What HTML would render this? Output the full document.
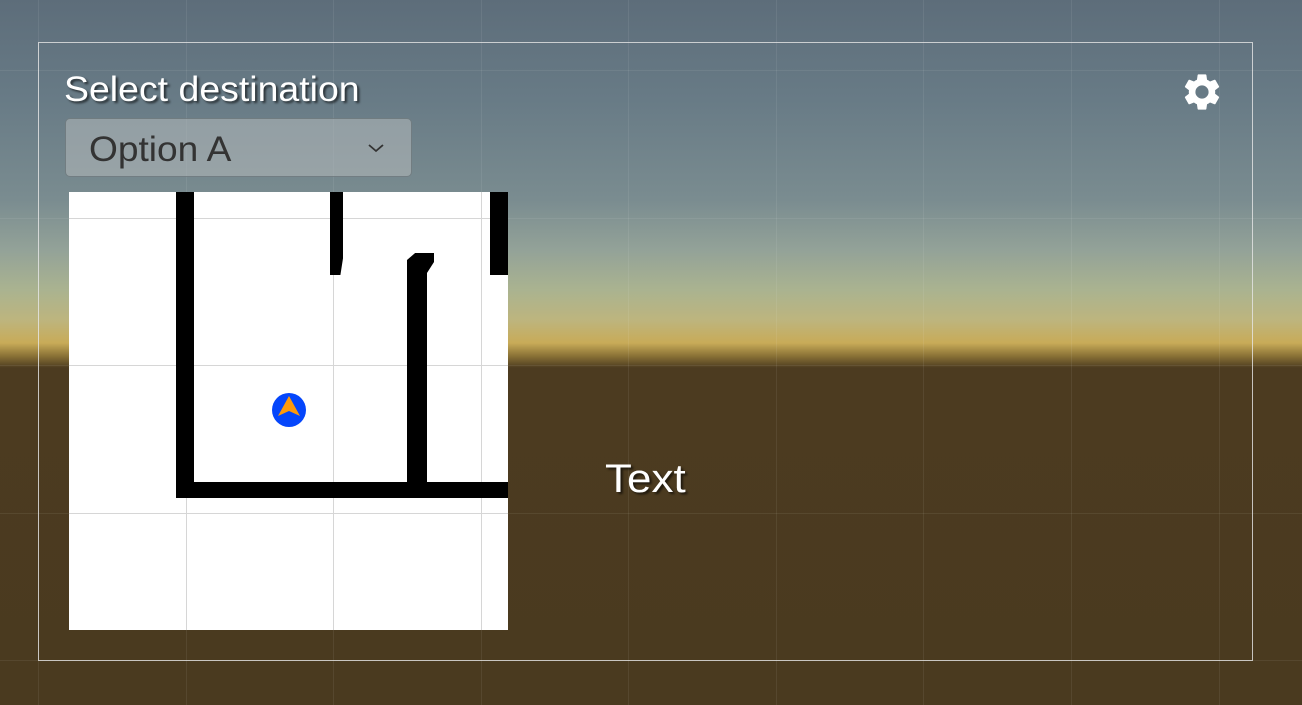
<!DOCTYPE html>
<html><head><style>
html,body{margin:0;padding:0;width:1302px;height:705px;overflow:hidden}
body{position:relative;font-family:"Liberation Sans",sans-serif;
background:linear-gradient(to bottom,#5d6d7a 0px,#687b86 100px,#7a8c90 200px,#93a298 250px,#aab390 290px,#bdb57e 320px,#c8ab58 343px,#8a7236 356px,#4c3b20 368px,#4a3a1f 705px)}
.gl{position:absolute;background:rgba(255,255,255,0.07)}
.v{width:1px;top:0;height:705px}
.h{height:1px;left:0;width:1302px}
.frame{position:absolute;left:38px;top:42px;width:1213px;height:617px;border:1px solid rgba(230,230,230,0.8)}
.title{position:absolute;left:64px;top:70px;font-size:35px;color:#fff;text-shadow:2px 2px 2px rgba(0,0,0,0.6);transform:scaleX(1.07);transform-origin:0 0}
.dd{position:absolute;left:65px;top:118px;width:347px;height:59px;border-radius:5px;background:rgba(180,185,188,0.55);border:1px solid rgba(90,100,105,0.6);box-sizing:border-box}
.dd span{position:absolute;left:23px;top:11px;font-size:35px;color:#333;transform:scaleX(1.06);transform-origin:0 0}
.map{position:absolute;left:69px;top:192px;width:439px;height:438px;background:#fff;overflow:hidden}
.map .ml{position:absolute;background:#d6d6d6}
.w{position:absolute;background:#000}
.text{position:absolute;left:605px;top:457px;font-size:40px;color:#fff;text-shadow:2px 2px 2px rgba(0,0,0,0.6);transform:scaleX(1.1);transform-origin:0 0}
</style></head><body>
<div class="gl v" style="left:38px"></div><div class="gl v" style="left:186px"></div><div class="gl v" style="left:333px"></div><div class="gl v" style="left:481px"></div><div class="gl v" style="left:628px"></div><div class="gl v" style="left:776px"></div><div class="gl v" style="left:923px"></div><div class="gl v" style="left:1071px"></div><div class="gl v" style="left:1219px"></div>
<div class="gl h" style="top:70px"></div><div class="gl h" style="top:218px"></div><div class="gl h" style="top:365px"></div><div class="gl h" style="top:513px"></div><div class="gl h" style="top:660px"></div>
<div class="frame"></div>
<div class="title">Select destination</div>
<div class="dd"><span>Option A</span>
<svg style="position:absolute;left:301px;top:23px" width="18" height="12" viewBox="0 0 18 12"><path d="M2 3 L9 9 L16 3" fill="none" stroke="#333" stroke-width="1.8"/></svg></div>
<svg style="position:absolute;left:1180px;top:70px" width="44" height="44" viewBox="0 0 24 24"><path fill="#fff" d="M19.14 12.94c.04-.3.06-.61.06-.94s-.02-.64-.07-.94l2.03-1.58a.49.49 0 0 0 .12-.61l-1.92-3.32a.49.49 0 0 0-.59-.22l-2.39.96c-.5-.38-1.030-.7-1.62-.94l-.36-2.54a.48.48 0 0 0-.48-.41h-3.84c-.24 0-.43.17-.47.41l-.36 2.540c-.59.24-1.130.57-1.62.94l-2.39-.96a.48.48 0 0 0-.59.22L2.74 8.87c-.12.21-.08.47.12.61l2.03 1.58c-.05.3-.09.63-.09.94s.02.64.07.94l-2.03 1.58a.49.49 0 0 0-.12.61l1.92 3.32c.12.22.37.29.59.22l2.39-.96c.5.38 1.03.7 1.62.94l.36 2.54c.05.24.24.41.48.41h3.84c.24 0 .44-.17.47-.41l.36-2.54c.59-.24 1.13-.56 1.62-.94l2.39.96c.22.08.47 0 .59-.22l1.92-3.32c.12-.22.07-.47-.12-.61l-2.01-1.58zM12 15.6A3.6 3.6 0 1 1 12 8.4a3.6 3.6 0 0 1 0 7.2z"/></svg>
<div class="map">
<div class="ml" style="left:117px;top:0;width:1px;height:438px"></div>
<div class="ml" style="left:264px;top:0;width:1px;height:438px"></div>
<div class="ml" style="left:412px;top:0;width:1px;height:438px"></div>
<div class="ml" style="top:26px;left:0;height:1px;width:439px"></div>
<div class="ml" style="top:173px;left:0;height:1px;width:439px"></div>
<div class="ml" style="top:321px;left:0;height:1px;width:439px"></div>
<div class="w" style="left:107px;top:0;width:18px;height:306px"></div>
<div class="w" style="left:107px;top:290px;width:332px;height:16px"></div>
<div class="w" style="left:261px;top:0;width:13px;height:83px;clip-path:polygon(0 0,100% 0,100% 80%,80% 100%,0 100%)"></div>
<div class="w" style="left:338px;top:72px;width:20px;height:234px"></div>
<div class="w" style="left:338px;top:61px;width:27px;height:20px;clip-path:polygon(0 35%,30% 0,100% 0,100% 45%,74% 100%,0 100%)"></div>
<div class="w" style="left:421px;top:0;width:18px;height:83px"></div>
<svg style="position:absolute;left:202px;top:200px" width="36" height="36" viewBox="0 0 36 36"><circle cx="18" cy="18" r="17" fill="#0546fb"/><path d="M18 4 L29 24 L18 19 L7 24 Z" fill="#ff9a0a"/></svg>
</div>
<div class="text">Text</div>
</body></html>
